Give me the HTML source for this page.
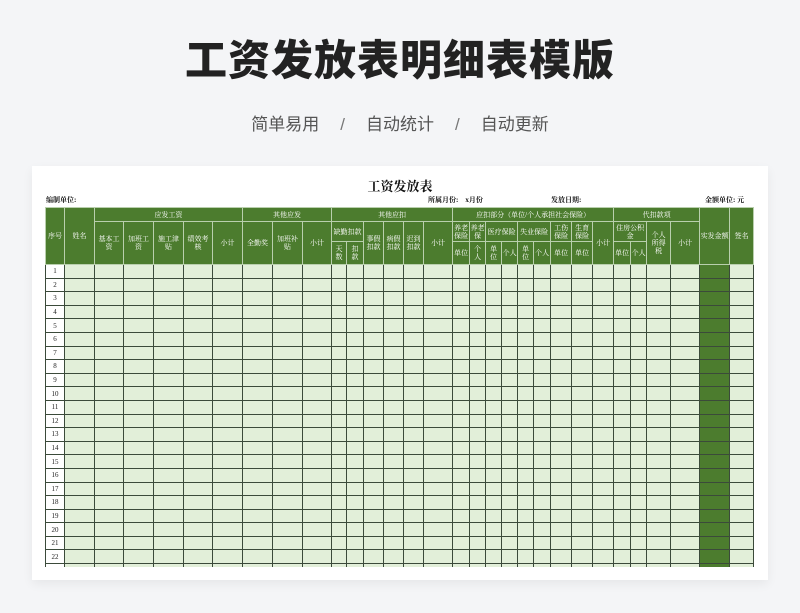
<!DOCTYPE html>
<html><head><meta charset="utf-8"><style>
body{margin:0;width:800px;height:613px;background:#f4f5f7;overflow:hidden;font-family:"Liberation Sans","Noto Sans CJK SC",sans-serif;position:relative}
.t{position:absolute;left:0;width:800px;top:34px;text-align:center;font-size:42px;font-weight:900;color:#222;letter-spacing:1px;line-height:54px}
.s{position:absolute;left:0;width:800px;top:113px;text-align:center;font-size:17px;color:#555;line-height:24px;word-spacing:0}
.s span{display:inline-block;margin:0 21px;color:#777}
.card{position:absolute;left:32px;top:166px;width:736px;height:414px;background:#fff;box-shadow:0 4px 10px rgba(0,0,0,.06)}
.ser{font-family:"Liberation Serif","Noto Serif CJK SC",serif}
.ct{position:absolute;top:10px;left:0;width:736px;text-align:center;font-size:13px;font-weight:bold;color:#111}
.lb{position:absolute;top:29px;font-size:7px;font-weight:bold;color:#111}
.wrap{position:absolute;left:13px;top:41px;width:709px;height:360px;overflow:hidden}
table{border-collapse:collapse;table-layout:fixed;width:709px}
td{padding:0;text-align:center;font-size:7px;line-height:8px;overflow:hidden;font-family:"Liberation Serif","Noto Serif CJK SC",serif}
thead td{background:#4c7c2e;color:#fff;border:1px solid #b9cfad}
tbody td{background:#e2efd9;border:1px solid #3b4a3a;height:12.6px;color:#222}
tbody td.n{background:#fff}
tbody td.g{background:#4c7c2e}
</style></head><body>
<div class="t">工资发放表明细表模版</div>
<div class="s">简单易用<span>/</span>自动统计<span>/</span>自动更新</div>
<div class="card ser">
<div class="ct">工资发放表</div>
<div class="lb" style="left:14px">编制单位:</div>
<div class="lb" style="left:396px">所属月份:&nbsp;&nbsp;&nbsp;&nbsp;x月份</div>
<div class="lb" style="left:519px">发放日期:</div>
<div class="lb" style="left:673px">金额单位: 元</div>
<div class="wrap"><table>
<colgroup><col style="width:19px"><col style="width:30px"><col style="width:29px"><col style="width:30px"><col style="width:30px"><col style="width:29px"><col style="width:30px"><col style="width:30px"><col style="width:30px"><col style="width:29px"><col style="width:15px"><col style="width:17px"><col style="width:20px"><col style="width:20px"><col style="width:20px"><col style="width:29px"><col style="width:17px"><col style="width:16px"><col style="width:16px"><col style="width:16px"><col style="width:16px"><col style="width:17px"><col style="width:21px"><col style="width:21px"><col style="width:21px"><col style="width:17px"><col style="width:16px"><col style="width:24px"><col style="width:29px"><col style="width:30px"><col style="width:24px"></colgroup>
<thead>
<tr style="height:14px"><td rowspan="3">序号</td><td rowspan="3">姓名</td><td colspan="5">应发工资</td><td colspan="3">其他应发</td><td colspan="6">其他应扣</td><td colspan="9">应扣部分（单位/个人承担社会保险）</td><td colspan="4">代扣款项</td><td rowspan="3">实发金额</td><td rowspan="3">签名</td></tr>
<tr style="height:20px"><td rowspan="2">基本工<br>资</td><td rowspan="2">加班工<br>资</td><td rowspan="2">施工津<br>贴</td><td rowspan="2">绩效考<br>核</td><td rowspan="2">小计</td><td rowspan="2">全勤奖</td><td rowspan="2">加班补<br>贴</td><td rowspan="2">小计</td><td colspan="2">缺勤扣款</td><td rowspan="2">事假<br>扣款</td><td rowspan="2">病假<br>扣款</td><td rowspan="2">迟到<br>扣款</td><td rowspan="2">小计</td><td>养老<br>保险</td><td>养老<br>保</td><td colspan="2">医疗保险</td><td colspan="2">失业保险</td><td>工伤<br>保险</td><td>生育<br>保险</td><td rowspan="2">小计</td><td colspan="2">住房公积<br>金</td><td rowspan="2">个人<br>所得<br>税</td><td rowspan="2">小计</td></tr>
<tr style="height:23px"><td>天<br>数</td><td>扣<br>款</td><td>单位</td><td>个<br>人</td><td>单<br>位</td><td>个人</td><td>单<br>位</td><td>个人</td><td>单位</td><td>单位</td><td>单位</td><td>个人</td></tr>
</thead>
<tbody>
<tr><td class="n">1</td><td></td><td></td><td></td><td></td><td></td><td></td><td></td><td></td><td></td><td></td><td></td><td></td><td></td><td></td><td></td><td></td><td></td><td></td><td></td><td></td><td></td><td></td><td></td><td></td><td></td><td></td><td></td><td></td><td class="g"></td><td></td></tr>
<tr><td class="n">2</td><td></td><td></td><td></td><td></td><td></td><td></td><td></td><td></td><td></td><td></td><td></td><td></td><td></td><td></td><td></td><td></td><td></td><td></td><td></td><td></td><td></td><td></td><td></td><td></td><td></td><td></td><td></td><td></td><td class="g"></td><td></td></tr>
<tr><td class="n">3</td><td></td><td></td><td></td><td></td><td></td><td></td><td></td><td></td><td></td><td></td><td></td><td></td><td></td><td></td><td></td><td></td><td></td><td></td><td></td><td></td><td></td><td></td><td></td><td></td><td></td><td></td><td></td><td></td><td class="g"></td><td></td></tr>
<tr><td class="n">4</td><td></td><td></td><td></td><td></td><td></td><td></td><td></td><td></td><td></td><td></td><td></td><td></td><td></td><td></td><td></td><td></td><td></td><td></td><td></td><td></td><td></td><td></td><td></td><td></td><td></td><td></td><td></td><td></td><td class="g"></td><td></td></tr>
<tr><td class="n">5</td><td></td><td></td><td></td><td></td><td></td><td></td><td></td><td></td><td></td><td></td><td></td><td></td><td></td><td></td><td></td><td></td><td></td><td></td><td></td><td></td><td></td><td></td><td></td><td></td><td></td><td></td><td></td><td></td><td class="g"></td><td></td></tr>
<tr><td class="n">6</td><td></td><td></td><td></td><td></td><td></td><td></td><td></td><td></td><td></td><td></td><td></td><td></td><td></td><td></td><td></td><td></td><td></td><td></td><td></td><td></td><td></td><td></td><td></td><td></td><td></td><td></td><td></td><td></td><td class="g"></td><td></td></tr>
<tr><td class="n">7</td><td></td><td></td><td></td><td></td><td></td><td></td><td></td><td></td><td></td><td></td><td></td><td></td><td></td><td></td><td></td><td></td><td></td><td></td><td></td><td></td><td></td><td></td><td></td><td></td><td></td><td></td><td></td><td></td><td class="g"></td><td></td></tr>
<tr><td class="n">8</td><td></td><td></td><td></td><td></td><td></td><td></td><td></td><td></td><td></td><td></td><td></td><td></td><td></td><td></td><td></td><td></td><td></td><td></td><td></td><td></td><td></td><td></td><td></td><td></td><td></td><td></td><td></td><td></td><td class="g"></td><td></td></tr>
<tr><td class="n">9</td><td></td><td></td><td></td><td></td><td></td><td></td><td></td><td></td><td></td><td></td><td></td><td></td><td></td><td></td><td></td><td></td><td></td><td></td><td></td><td></td><td></td><td></td><td></td><td></td><td></td><td></td><td></td><td></td><td class="g"></td><td></td></tr>
<tr><td class="n">10</td><td></td><td></td><td></td><td></td><td></td><td></td><td></td><td></td><td></td><td></td><td></td><td></td><td></td><td></td><td></td><td></td><td></td><td></td><td></td><td></td><td></td><td></td><td></td><td></td><td></td><td></td><td></td><td></td><td class="g"></td><td></td></tr>
<tr><td class="n">11</td><td></td><td></td><td></td><td></td><td></td><td></td><td></td><td></td><td></td><td></td><td></td><td></td><td></td><td></td><td></td><td></td><td></td><td></td><td></td><td></td><td></td><td></td><td></td><td></td><td></td><td></td><td></td><td></td><td class="g"></td><td></td></tr>
<tr><td class="n">12</td><td></td><td></td><td></td><td></td><td></td><td></td><td></td><td></td><td></td><td></td><td></td><td></td><td></td><td></td><td></td><td></td><td></td><td></td><td></td><td></td><td></td><td></td><td></td><td></td><td></td><td></td><td></td><td></td><td class="g"></td><td></td></tr>
<tr><td class="n">13</td><td></td><td></td><td></td><td></td><td></td><td></td><td></td><td></td><td></td><td></td><td></td><td></td><td></td><td></td><td></td><td></td><td></td><td></td><td></td><td></td><td></td><td></td><td></td><td></td><td></td><td></td><td></td><td></td><td class="g"></td><td></td></tr>
<tr><td class="n">14</td><td></td><td></td><td></td><td></td><td></td><td></td><td></td><td></td><td></td><td></td><td></td><td></td><td></td><td></td><td></td><td></td><td></td><td></td><td></td><td></td><td></td><td></td><td></td><td></td><td></td><td></td><td></td><td></td><td class="g"></td><td></td></tr>
<tr><td class="n">15</td><td></td><td></td><td></td><td></td><td></td><td></td><td></td><td></td><td></td><td></td><td></td><td></td><td></td><td></td><td></td><td></td><td></td><td></td><td></td><td></td><td></td><td></td><td></td><td></td><td></td><td></td><td></td><td></td><td class="g"></td><td></td></tr>
<tr><td class="n">16</td><td></td><td></td><td></td><td></td><td></td><td></td><td></td><td></td><td></td><td></td><td></td><td></td><td></td><td></td><td></td><td></td><td></td><td></td><td></td><td></td><td></td><td></td><td></td><td></td><td></td><td></td><td></td><td></td><td class="g"></td><td></td></tr>
<tr><td class="n">17</td><td></td><td></td><td></td><td></td><td></td><td></td><td></td><td></td><td></td><td></td><td></td><td></td><td></td><td></td><td></td><td></td><td></td><td></td><td></td><td></td><td></td><td></td><td></td><td></td><td></td><td></td><td></td><td></td><td class="g"></td><td></td></tr>
<tr><td class="n">18</td><td></td><td></td><td></td><td></td><td></td><td></td><td></td><td></td><td></td><td></td><td></td><td></td><td></td><td></td><td></td><td></td><td></td><td></td><td></td><td></td><td></td><td></td><td></td><td></td><td></td><td></td><td></td><td></td><td class="g"></td><td></td></tr>
<tr><td class="n">19</td><td></td><td></td><td></td><td></td><td></td><td></td><td></td><td></td><td></td><td></td><td></td><td></td><td></td><td></td><td></td><td></td><td></td><td></td><td></td><td></td><td></td><td></td><td></td><td></td><td></td><td></td><td></td><td></td><td class="g"></td><td></td></tr>
<tr><td class="n">20</td><td></td><td></td><td></td><td></td><td></td><td></td><td></td><td></td><td></td><td></td><td></td><td></td><td></td><td></td><td></td><td></td><td></td><td></td><td></td><td></td><td></td><td></td><td></td><td></td><td></td><td></td><td></td><td></td><td class="g"></td><td></td></tr>
<tr><td class="n">21</td><td></td><td></td><td></td><td></td><td></td><td></td><td></td><td></td><td></td><td></td><td></td><td></td><td></td><td></td><td></td><td></td><td></td><td></td><td></td><td></td><td></td><td></td><td></td><td></td><td></td><td></td><td></td><td></td><td class="g"></td><td></td></tr>
<tr><td class="n">22</td><td></td><td></td><td></td><td></td><td></td><td></td><td></td><td></td><td></td><td></td><td></td><td></td><td></td><td></td><td></td><td></td><td></td><td></td><td></td><td></td><td></td><td></td><td></td><td></td><td></td><td></td><td></td><td></td><td class="g"></td><td></td></tr>
<tr><td class="n">23</td><td></td><td></td><td></td><td></td><td></td><td></td><td></td><td></td><td></td><td></td><td></td><td></td><td></td><td></td><td></td><td></td><td></td><td></td><td></td><td></td><td></td><td></td><td></td><td></td><td></td><td></td><td></td><td></td><td class="g"></td><td></td></tr>
</tbody></table></div>
</div>
</body></html>
